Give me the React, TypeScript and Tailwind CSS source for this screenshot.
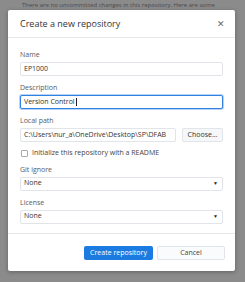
const font = { fontFamily: '"Open Sans", "Noto Sans", sans-serif' };

const Label = ({ children, className = "" }: { children: React.ReactNode; className?: string }) => (
  <div className={`text-[7px] leading-[8px] text-[#5a5a5a] ${className}`}>{children}</div>
);

const Field = ({ value, active = false, className = "" }: { value: string; active?: boolean; className?: string }) => (
  <div
    className={`h-[14px] flex items-center px-[3px] rounded-[2px] bg-white text-[7px] text-[#333] ${
      active ? "border border-[#2f81e4] shadow-[0_0_0_1px_rgba(47,129,228,0.35)]" : "border border-[#e1e4e8]"
    } ${className}`}
  >
    {value}
    {active && <span className="w-px h-[8px] bg-[#222] ml-[1px]" />}
  </div>
);

const Select = ({ value }: { value: string }) => (
  <div className="h-[14px] flex items-center justify-between px-[3px] rounded-[2px] bg-white border border-[#e1e4e8] text-[7px] text-[#333]">
    <span>{value}</span>
    <span className="text-[5px] text-[#222] mr-[1px]">▼</span>
  </div>
);

export default function App() {
  return (
    <div style={font} className="w-[245px] h-[282px] bg-[#8b8b8b] overflow-hidden">
      <div className="h-[10px] pl-[22px] text-[6px] leading-[8px] text-[#4a4a4a] whitespace-nowrap pt-[1px]">
        There are no uncommitted changes in this repository. Here are some
      </div>
      <div className="ml-[8px] w-[227px] h-[261px] bg-white rounded-[2px] shadow-[0_1px_4px_rgba(0,0,0,0.3)] flex flex-col">
        <div className="h-[28px] flex items-center justify-between px-[12px] border-b border-[#e8e8e8]">
          <span className="text-[9px] text-[#333]">Create a new repository</span>
          <span className="text-[9px] text-[#666] mr-[-2px]">✕</span>
        </div>
        <div className="flex-1 px-[12px] pt-[13px]">
          <Label>Name</Label>
          <Field value="EP1000" className="mt-[3px]" />
          <Label className="mt-[8px]">Description</Label>
          <Field value="Version Control" active className="mt-[3px]" />
          <Label className="mt-[8px]">Local path</Label>
          <div className="flex gap-[6px] mt-[3px]">
            <Field value="C:\Users\nur_a\OneDrive\Desktop\SP\DFAB" className="flex-1" />
            <div className="w-[41px] h-[14px] flex items-center justify-center rounded-[2px] bg-[#f6f7f8] border border-[#e1e4e8] text-[7px] text-[#333]">
              Choose...
            </div>
          </div>
          <div className="flex items-center gap-[4px] mt-[6px] ml-[1px]">
            <div className="w-[7px] h-[7px] border border-[#aaa] rounded-[1px] bg-white" />
            <span className="text-[7px] text-[#444]">Initialize this repository with a README</span>
          </div>
          <Label className="mt-[7px]">Git ignore</Label>
          <div className="mt-[3px]">
            <Select value="None" />
          </div>
          <Label className="mt-[8px]">License</Label>
          <div className="mt-[3px]">
            <Select value="None" />
          </div>
        </div>
        <div className="h-[38px] border-t border-[#e8e8e8] flex items-center justify-end gap-[4px] px-[10px] pt-[1px]">
          <div className="w-[69px] h-[14px] flex items-center justify-center rounded-[2px] bg-[#1c7be0] text-[7px] text-white">
            Create repository
          </div>
          <div className="w-[68px] h-[14px] flex items-center justify-center rounded-[2px] bg-[#fafbfc] border border-[#e1e4e8] text-[7px] text-[#444]">
            Cancel
          </div>
        </div>
      </div>
    </div>
  );
}
